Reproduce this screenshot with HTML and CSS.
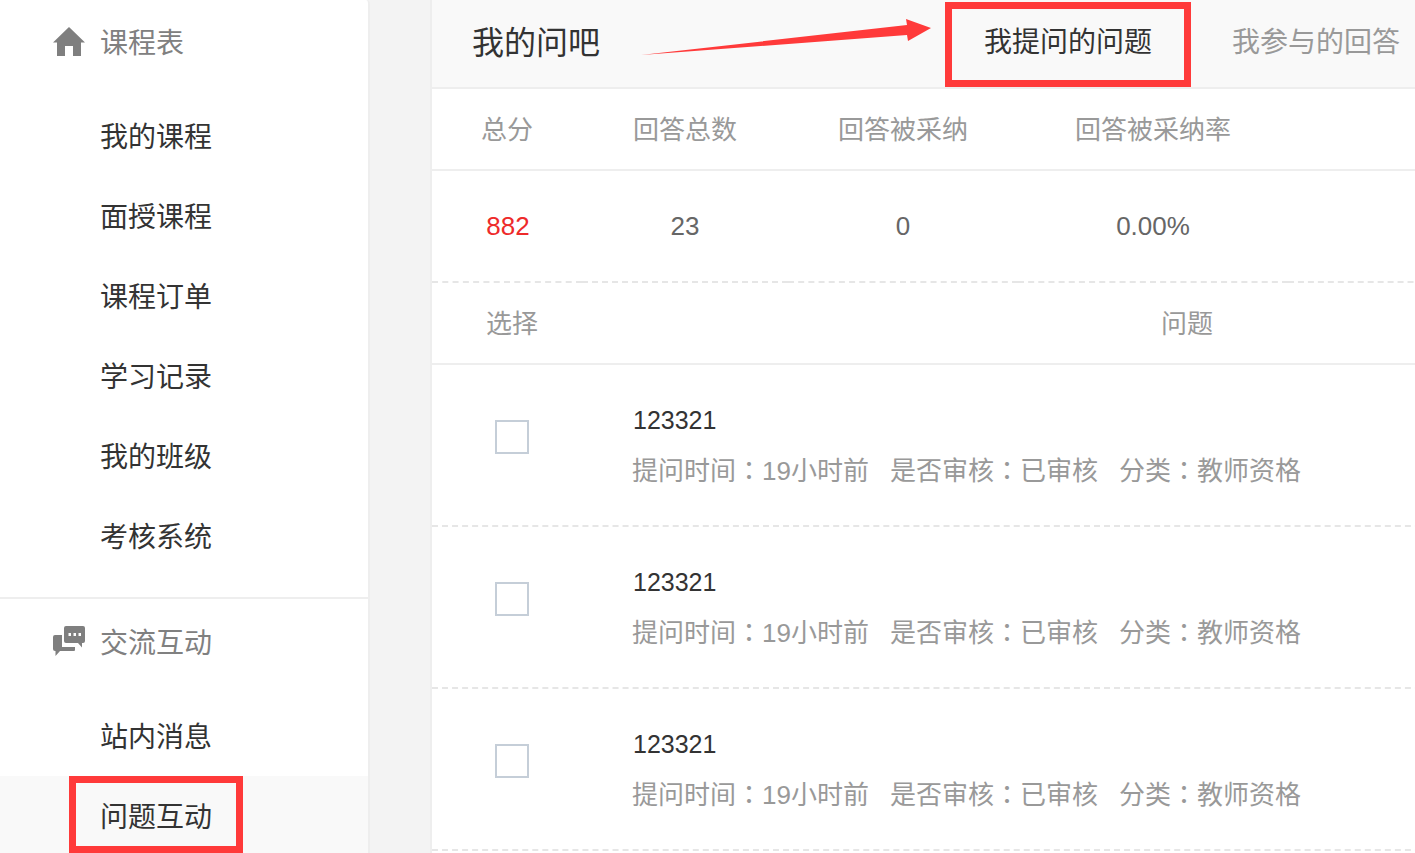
FILE: index.html
```html
<!DOCTYPE html>
<html lang="zh-CN">
<head>
<meta charset="utf-8">
<title>我的问吧</title>
<link rel="stylesheet" href="styles.css">
</head>
<body>
<div class="page">
  <aside class="sidebar">
    <section class="group group-first">
      <h3 class="group-title">
        <svg class="group-icon" viewBox="0 0 32 30"><path d="M16 0 L32 15.500 L28 15.500 L28 29 L20 29 L20 19 L12 19 L12 29 L4 29 L4 15.500 L0 15.500 Z"/></svg>
        <span>课程表</span>
      </h3>
      <ul class="menu">
        <li class="menu-item">我的课程</li>
        <li class="menu-item">面授课程</li>
        <li class="menu-item">课程订单</li>
        <li class="menu-item">学习记录</li>
        <li class="menu-item">我的班级</li>
        <li class="menu-item">考核系统</li>
      </ul>
    </section>
    <section class="group">
      <h3 class="group-title">
        <svg class="group-icon" viewBox="0 0 32 30"><path d="M2 9 H9 V21 H22 V24 Q22 25 21 25 H7 L2.500 30 V25 H2 Q0 25 0 23 V11 Q0 9 2 9 Z"/><path fill-rule="evenodd" d="M13 0 H30 Q32 0 32 2 V15 Q32 17 30 17 H29 V21.500 L25 17 H13 Q11 17 11 15 V2 Q11 0 13 0 Z M15.500 7 V10 H18 V7 Z M20.500 7 V10 H23 V7 Z M25.500 7 V10 H28 V7 Z"/></svg>
        <span>交流互动</span>
      </h3>
      <ul class="menu">
        <li class="menu-item">站内消息</li>
        <li class="menu-item menu-item-active">问题互动</li>
      </ul>
    </section>
  </aside>

  <div class="gutter"></div>

  <main class="main">
    <header class="main-head">
      <h2 class="main-title">我的问吧</h2>
      <nav class="tabs">
        <a class="tab tab-active">我提问的问题</a>
        <a class="tab">我参与的回答</a>
      </nav>
    </header>

    <div class="stats stats-head">
      <div class="stat">总分</div>
      <div class="stat">回答总数</div>
      <div class="stat">回答被采纳</div>
      <div class="stat">回答被采纳率</div>
      <div class="stat"></div>
    </div>
    <div class="stats stats-body">
      <div class="stat stat-score">882</div>
      <div class="stat">23</div>
      <div class="stat">0</div>
      <div class="stat">0.00%</div>
      <div class="stat"></div>
    </div>

    <div class="list-head">
      <div class="col-check">选择</div>
      <div class="col-question">问题</div>
    </div>

    <article class="row">
      <div class="col-check"><span class="checkbox"></span></div>
      <div class="col-question">
        <div class="q-title">123321</div>
        <div class="q-meta"><span>提问时间<i class="colon" lang="zh-TW">：</i>19小时前</span><span>是否审核<i class="colon" lang="zh-TW">：</i>已审核</span><span>分类<i class="colon" lang="zh-TW">：</i>教师资格</span></div>
      </div>
    </article>
    <article class="row">
      <div class="col-check"><span class="checkbox"></span></div>
      <div class="col-question">
        <div class="q-title">123321</div>
        <div class="q-meta"><span>提问时间<i class="colon" lang="zh-TW">：</i>19小时前</span><span>是否审核<i class="colon" lang="zh-TW">：</i>已审核</span><span>分类<i class="colon" lang="zh-TW">：</i>教师资格</span></div>
      </div>
    </article>
    <article class="row">
      <div class="col-check"><span class="checkbox"></span></div>
      <div class="col-question">
        <div class="q-title">123321</div>
        <div class="q-meta"><span>提问时间<i class="colon" lang="zh-TW">：</i>19小时前</span><span>是否审核<i class="colon" lang="zh-TW">：</i>已审核</span><span>分类<i class="colon" lang="zh-TW">：</i>教师资格</span></div>
      </div>
    </article>
  </main>
</div>

<svg class="mark-arrow" viewBox="0 0 1415 853"><polygon points="641,55 907,25 906,19 931,28 908,41 907,35"/></svg>
<div class="mark-box mark-tab"></div>
<div class="mark-box mark-menu"></div>
</body>
</html>
```

FILE: styles.css
```css
* { box-sizing: border-box; }
html, body { margin: 0; padding: 0; height: 100%; overflow: hidden; }
body {
  position: relative;
  background: #f3f3f3;
  color: #333;
  font-family: "Liberation Sans", "Noto Sans CJK SC", sans-serif;
  font-size: 26px;
}
ul { list-style: none; margin: 0; padding: 0; }
h2, h3 { margin: 0; font-weight: 400; }

.page { display: flex; height: 853px; width: 1415px; overflow: hidden; }

.sidebar {
  flex: 0 0 370px;
  background: #fff;
  border-right: 2px solid #eee;
  border-top-right-radius: 4px;
}
.group-first { height: 599px; border-bottom: 2px solid #eee; }
.group-title {
  display: flex;
  align-items: center;
  padding-left: 53px;
  color: #808080;
  font-size: 28px;
}
.group-first .group-title { height: 96px; padding-bottom: 12px; }
.group-first .group-title span { padding-bottom: 2px; }
.group + .group .group-title { height: 97px; padding-bottom: 13px; }
.group-icon { width: 32px; height: 30px; margin-right: 15px; fill: #7f7f7f; flex: none; }
.menu-item {
  height: 80px;
  line-height: 84px;
  padding-left: 100px;
  font-size: 28px;
  color: #333;
}
.menu-item-active { background: #f9f9f9; }

.gutter { flex: 0 0 60px; background: #f3f3f3; }

.main {
  flex: 0 0 1352px;
  background: #fff;
  border-left: 2px solid #eee;
}
.main-head {
  display: flex;
  height: 89px;
  padding-bottom: 8px;
  background: #f9f9f9;
  border-bottom: 2px solid #eee;
  align-items: center;
}
.main-title {
  width: 552px;
  padding-left: 40px;
  font-size: 32px;
  color: #333;
  flex: none;
}
.tabs { display: flex; gap: 80px; font-size: 28px; color: #999; }
.tab-active { color: #333; }
.tab { flex: none; }

.stats { display: grid; grid-template-columns: 150px 206px 230px 270px 1fr; text-align: center; }
.stats-head { height: 82px; align-items: center; color: #999; border-bottom: 2px solid #eee; padding-bottom: 3px; }
.stats-body { height: 112px; color: #666; }
.stat { display: flex; align-items: center; justify-content: center; border-bottom: 2px dashed #e6e6e6; }
.stats-head .stat { border-bottom: 0; }
.stat-score { color: #ee2a2a; padding-left: 2px; }

.list-head { display: flex; height: 82px; padding-bottom: 3px; color: #999; align-items: center; border-bottom: 2px solid #eee; }
.col-check { flex: 0 0 160px; text-align: center; }
.list-head .col-question { flex: 0 0 1190px; text-align: center; }

.row { display: flex; height: 162px; border-bottom: 2px dashed #e6e6e6; align-items: flex-start; }
.row .col-question { padding: 36px 0 0 40px; }
.row .col-check { padding-top: 55px; }
.checkbox {
  display: block;
  width: 34px;
  height: 34px;
  margin: 0 auto;
  border: 2px solid #c5ced8;
  background: #fff;
}
.q-title { height: 49px; line-height: 34px; font-size: 25px; color: #333; padding: 2px 0 0 1px; }
.q-meta { display: flex; gap: 21px; color: #999; line-height: 38px; height: 38px; }
.colon { font-style: normal; font-family: "Noto Sans CJK TC", sans-serif; }

.mark-arrow { position: absolute; left: 0; top: 0; width: 1415px; height: 853px; pointer-events: none; }
.mark-arrow polygon { fill: #ff3a3a; }
.mark-box { position: absolute; border: 7px solid #ff3a3a; }
.mark-tab { left: 945px; top: 2px; width: 246px; height: 85px; }
.mark-menu { left: 69px; top: 776px; width: 174px; height: 77px; }
```
